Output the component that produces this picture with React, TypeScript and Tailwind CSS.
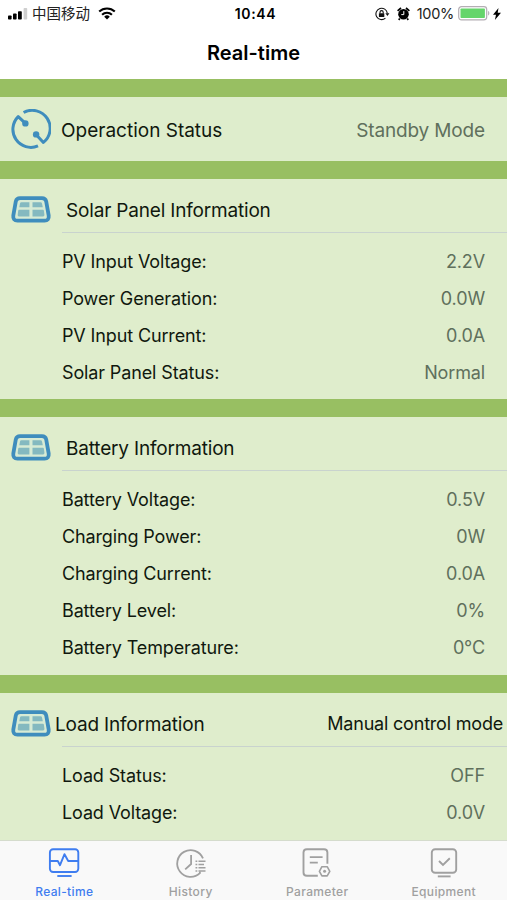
import clsx from 'clsx'
import { ReactElement } from 'react'

type Row = { label: string; value: string }

const solarRows: Row[] = [
  { label: 'PV Input Voltage:', value: '2.2V' },
  { label: 'Power Generation:', value: '0.0W' },
  { label: 'PV Input Current:', value: '0.0A' },
  { label: 'Solar Panel Status:', value: 'Normal' },
]

const batteryRows: Row[] = [
  { label: 'Battery Voltage:', value: '0.5V' },
  { label: 'Charging Power:', value: '0W' },
  { label: 'Charging Current:', value: '0.0A' },
  { label: 'Battery Level:', value: '0%' },
  { label: 'Battery Temperature:', value: '0°C' },
]

const loadRows: Row[] = [
  { label: 'Load Status:', value: 'OFF' },
  { label: 'Load Voltage:', value: '0.0V' },
]

const SignalIcon = (): ReactElement => (
  <svg width="20" height="12" viewBox="0 0 20 12">
    <rect x="0" y="7.5" width="3.6" height="4" rx="0.8" />
    <rect x="5" y="5.5" width="3.6" height="6" rx="0.8" />
    <rect x="10" y="3.2" width="3.8" height="8.3" rx="0.8" />
    <rect x="15.6" y="0" width="3.6" height="11.5" rx="0.8" fill="#cfcfcf" />
  </svg>
)

const WifiIcon = (): ReactElement => (
  <svg width="18" height="13" viewBox="0 0 18 13" fill="none" stroke="#000" strokeWidth="2.1">
    <path d="M1.2 4.6a11.2 11.2 0 0 1 15.6 0" />
    <path d="M4.1 7.7a7 7 0 0 1 9.8 0" />
    <path d="M9 12.4 6.2 9.7a4 4 0 0 1 5.6 0z" fill="#000" stroke="none" />
  </svg>
)

const RotationLockIcon = (): ReactElement => (
  <svg width="15" height="14" viewBox="0 0 15 14" fill="none" stroke="#111" strokeWidth="1.1">
    <path d="M12.3 6.3A5.7 5.7 0 1 0 10.4 11.2" />
    <path d="M10.4 6.2h4l-2 2.8z" fill="#111" stroke="none" />
    <rect x="3.9" y="6.2" width="5.4" height="3.9" rx="0.5" fill="#111" stroke="none" />
    <path d="M5 6.4V5.2a1.6 1.6 0 0 1 3.2 0v1.2" />
  </svg>
)

const AlarmIcon = (): ReactElement => (
  <svg width="13" height="14" viewBox="0 0 13 14">
    <circle cx="6.5" cy="7.2" r="5.3" />
    <path d="M0.6 3.8 4 1M12.4 3.8 9 1M2.8 11.5 1.7 12.9M10.2 11.5l1.1 1.4" stroke="#000" strokeWidth="1.7" />
    <path d="M6.8 4.1v3.5H4.3" fill="none" stroke="#fff" strokeWidth="1" />
  </svg>
)

const BatteryIcon = (): ReactElement => (
  <svg width="33" height="15" viewBox="0 0 33 15">
    <rect x="0.7" y="0.7" width="28" height="13.2" rx="2.8" fill="#fff" stroke="#b4aeb4" strokeWidth="1.2" />
    <rect x="2.5" y="2.5" width="24.4" height="9.6" rx="0.8" fill="#65d56b" />
    <path d="M30.1 5v4.6c1.7-.5 1.7-4.1 0-4.6z" fill="#b4aeb4" />
  </svg>
)

const BoltIcon = (): ReactElement => (
  <svg width="8" height="12" viewBox="0 0 8 12">
    <path d="M5.5 0 0 6.8h3L1.9 12 8 4.8H4.7z" />
  </svg>
)

const StatusIcon = (): ReactElement => (
  <svg width="40" height="40" viewBox="0 0 40 40" fill="none" stroke="#3f8dbd" strokeWidth="3">
    <path d="M12.6 3.5A18 18 0 0 1 32.4 33.4L25 25.4" strokeLinejoin="round" />
    <path d="M27 36.9A18 18 0 0 1 7.2 7.6L14.2 14.2" strokeLinejoin="round" />
    <circle cx="14.4" cy="14.4" r="3.2" fill="#3f8dbd" stroke="none" />
    <circle cx="25.1" cy="25.4" r="3.2" fill="#3f8dbd" stroke="none" />
  </svg>
)

const PanelIcon = (): ReactElement => (
  <svg width="40" height="27" viewBox="0 0 40 27">
    <path
      d="M9 2.2H31Q34.4 2.2 35.2 5.4L37.7 19.6Q38.3 24.6 33.5 24.6H6.5Q1.7 24.6 2.3 19.6L4.8 5.4Q5.6 2.2 9 2.2z"
      fill="#d7ebd5"
      stroke="#3f8dbd"
      strokeWidth="3.8"
    />
    <g fill="#84b9c0">
      <path d="M10.5 6.2H18.4V11.2H8.3L9 7.5Q9.2 6.2 10.5 6.2z" />
      <path d="M21.5 6.2H29.5Q30.8 6.2 31 7.5L31.8 11.2H21.5z" />
      <path d="M8 13.8H18.4V20.4H8Q6.4 20.4 6.7 18.8L7.2 14.8Q7.4 13.8 8 13.8z" />
      <path d="M21.5 13.8H32Q32.7 13.8 32.9 14.8L33.4 18.8Q33.6 20.4 32 20.4H21.5z" />
    </g>
  </svg>
)

const MonitorIcon = (): ReactElement => (
  <svg width="32" height="32" viewBox="0 0 32 32" fill="none" stroke="currentColor" strokeWidth="1.9" strokeLinejoin="round">
    <rect x="1.9" y="2.2" width="28.4" height="22.8" rx="3.2" />
    <path d="M2 14H9.8L12 18.2 16.5 7.2 20.2 14H30" />
    <path d="M9.3 29H23.6" />
  </svg>
)

const HistoryIcon = (): ReactElement => (
  <svg width="32" height="32" viewBox="0 0 32 32" fill="none" stroke="currentColor" strokeWidth="1.8">
    <path d="M28 11.4A13.4 13.4 0 1 0 24.9 26.2V24.6" />
    <path d="M16.1 8V17L10.2 22.4" />
    <path d="M20.5 14.2h1.8M23.5 14.2h7M20.5 17.6h1.8M23.5 17.6h5.5M20.5 20.8h1.8M23.5 20.8h7M20.5 24h1.8M23.5 24h7" strokeWidth="1.5" />
  </svg>
)

const ParameterIcon = (): ReactElement => (
  <svg width="32" height="32" viewBox="0 0 32 32" fill="none" stroke="currentColor" strokeWidth="1.9">
    <path d="M16.8 28.8H5.9Q2.5 28.8 2.5 25.4V5.6Q2.5 2.2 5.9 2.2H23Q26.4 2.2 26.4 5.6V16.8" />
    <path d="M8.8 10.1H21.6M8.8 15.6H16.8" />
    <path d="M18.4 24.3 20.9 19.7H26.2L28.8 24.3 26.2 28.9H20.9z" strokeWidth="1.6" strokeLinejoin="round" />
    <circle cx="23.6" cy="24.3" r="1.5" fill="currentColor" stroke="none" />
  </svg>
)

const EquipmentIcon = (): ReactElement => (
  <svg width="32" height="32" viewBox="0 0 32 32" fill="none" stroke="currentColor" strokeWidth="1.9">
    <rect x="3.8" y="2.2" width="24.4" height="23.6" rx="3.4" />
    <path d="M11 14 15 17.9 21.8 11.3" />
    <path d="M9.8 29.4H22.6" />
  </svg>
)

const tabs = [
  { label: 'Real-time', icon: <MonitorIcon />, active: true },
  { label: 'History', icon: <HistoryIcon /> },
  { label: 'Parameter', icon: <ParameterIcon /> },
  { label: 'Equipment', icon: <EquipmentIcon /> },
]

const InfoRow = ({ label, value }: Row): ReactElement => (
  <li className="flex h-[37px] items-center justify-between pr-[22px] pl-[62px] tracking-[-0.13px]">
    <span>{label}</span>
    <span className="text-[#60705c]">{value}</span>
  </li>
)

type SectionProps = {
  title: string
  rows: Row[]
  action?: string
  className?: string
}

const Section = ({ title, rows, action, className }: SectionProps): ReactElement => (
  <section className={clsx('shrink-0 bg-[#dfedcc]', className)}>
    <div className="flex h-[53px] items-center pt-[8px] pl-[11px]">
      <PanelIcon />
      <h2 className={clsx('pt-px text-[19px] tracking-[-0.18px]', action ? 'ml-1' : 'ml-[15px]')}>{title}</h2>
      {action && <span className="mr-1 ml-auto pt-px tracking-[-0.2px]">{action}</span>}
    </div>
    <div className="ml-[62px] h-px bg-[#c9d3ce]" />
    <ul className="pt-[10px]">
      {rows.map((row) => (
        <InfoRow key={row.label} {...row} />
      ))}
    </ul>
  </section>
)

const App = (): ReactElement => {
  return (
    <div className="flex h-[900px] w-[507px] flex-col overflow-hidden bg-white font-['Inter','Noto_Sans_CJK_SC',sans-serif] text-[18px] leading-none whitespace-nowrap text-[#10180e]">
      <header className="h-[79px] shrink-0 text-black">
        <div className="grid h-[27px] grid-cols-[1fr_auto_1fr] items-center">
          <div className="flex items-center pl-2">
            <SignalIcon />
            <span className="ml-1 pt-0.5 text-[14.5px] text-[#222]">中国移动</span>
            <span className="ml-2">
              <WifiIcon />
            </span>
          </div>
          <span className="pl-1 text-[14px] font-semibold tracking-[0.65px]">10:44</span>
          <div className="flex items-center justify-end pr-[6px]">
            <RotationLockIcon />
            <span className="ml-[7px]">
              <AlarmIcon />
            </span>
            <span className="ml-[7px] pt-0.5 text-[14.5px] tracking-[-0.3px] text-[#222]">100%</span>
            <span className="ml-1">
              <BatteryIcon />
            </span>
            <span className="ml-0.5">
              <BoltIcon />
            </span>
          </div>
        </div>
        <h1 className="flex h-[52px] items-center justify-center text-[20px] font-semibold">Real-time</h1>
      </header>

      <main className="flex min-h-0 flex-1 flex-col gap-[18px] overflow-hidden bg-[#98bf62] pt-[18px]">
        <section className="flex h-16 shrink-0 items-center bg-[#deedcc] pr-[22px] pl-[11px]">
          <StatusIcon />
          <h2 className="ml-[10px] pt-[3px] text-[19px]">Operaction Status</h2>
          <span className="ml-auto pt-[3px] text-[19px] tracking-[-0.15px] text-[#60705c]">Standby Mode</span>
        </section>
        <Section title="Solar Panel Information" rows={solarRows} className="h-[220px]" />
        <Section title="Battery Information" rows={batteryRows} className="h-[258px]" />
        <Section title="Load Information" rows={loadRows} action="Manual control mode" className="h-[147px]" />
      </main>

      <nav className="grid h-[60px] shrink-0 grid-cols-4 border-t border-[#d5dccd] bg-[#f9f9f9] pl-px">
        {tabs.map(({ label, icon, active }) => (
          <a
            key={label}
            className={clsx('flex flex-col items-center pt-[6px]', active ? 'text-[#3f7df0]' : 'text-[#a0a0a0]')}
          >
            {icon}
            <span className="mt-[7px] text-[12px] font-medium tracking-[0.35px]">{label}</span>
          </a>
        ))}
      </nav>
    </div>
  )
}

export default App
